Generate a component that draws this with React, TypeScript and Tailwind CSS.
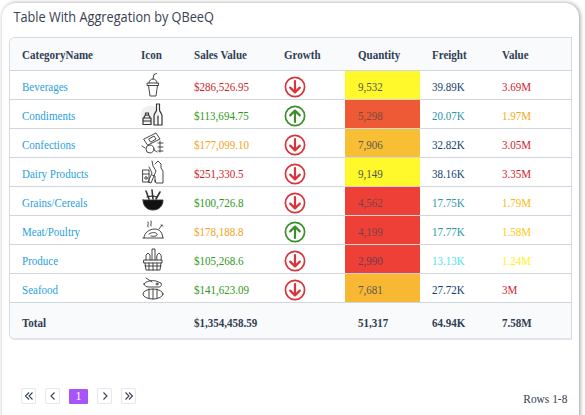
import { ReactNode } from 'react'

const Circle = ({ up }: { up: boolean }) => (
	<svg className="translate-y-[2px]" width="22" height="22" viewBox="0 0 22 22" fill="none" stroke={up ? '#3a8f2a' : '#d8343a'} strokeWidth="1.7" strokeLinecap="round" strokeLinejoin="round">
		<circle cx="11" cy="11" r="9.6" />
		{up ? <path d="M11 17V5.8M6.2 10.4 11 5.6l4.8 4.8" strokeWidth="2.2" /> : <path d="M11 5v11.200M6.200 11.600l4.800 4.800 4.800-4.800" strokeWidth="2.2" />}
	</svg>
)

const Ico = ({ children }: { children: ReactNode }) => (
	<svg className="mx-auto -translate-x-[3px]" width="24" height="26" viewBox="0 0 24 26" fill="none" stroke="#333" strokeWidth="0.9" strokeLinecap="round" strokeLinejoin="round">
		{children}
	</svg>
)

// the text in the reference is a little squeezed sideways
const T = ({ children }: { children: ReactNode }) => (
	<span className="inline-block origin-left translate-y-[3px] scale-x-[0.95] whitespace-nowrap">{children}</span>
)

const icons: Record<string, ReactNode> = {
	Beverages: (
		<Ico>
			<path d="M6.500 11h11v2.500h-11zM7.500 13.500l1.500 10.500h6l1.500-10.500M8 11c.3-2.800 2-4 4-4s3.700 1.200 4 4M12 7l1-4.500 2.500-1" />
		</Ico>
	),
	Condiments: (
		<Ico>
			<circle cx="9" cy="14" r="9.500" fill="#f0f0f0" stroke="none" />
			<path d="M2 17h8v6.500H2zM3 17c0-2 1-3 3-3s3 1 3 3M4.500 14v-2h3v2M2.500 20h7" strokeWidth="1.200" />
			<path d="M13 24V15c0-3 2.500-4 2.500-6V3h3v6c0 2 2.500 3 2.500 6v9zM17 15v9" strokeWidth="1.200" />
		</Ico>
	),
	Confections: (
		<Ico>
			<path d="M3 9 15 3l4 6-12 6zM8 9l5-3 2 3-5 3z" />
			<circle cx="9" cy="19" r="4" />
			<path d="M1 16l3 2M13 20l3 2M19 11v11M17 13h5M17 17h5M17 21h5" />
		</Ico>
	),
	'Dairy Products': (
		<Ico>
			<path d="M2 11h6v12H2zM2 15h6M14 5l3-3 3 3v4l2 3v12h-7l-1-3M11 2l1 5 3 5-5 12-3-1 4-9-3-6" />
			<circle cx="5" cy="19" r="1.300" />
			<path d="M11 16l3 1v6" />
		</Ico>
	),
	'Grains/Cereals': (
		<Ico>
			<path d="M2 12h20c0 6-4 10-10 10S2 18 2 12z" fill="#111" />
			<path d="M8 11 5 3M12 11 11 2M15 11l4-7" strokeWidth="1.600" />
			<path d="M6 9c3-1 7-1 10 0" strokeWidth="1.200" />
		</Ico>
	),
	'Meat/Poultry': (
		<Ico>
			<path d="M2 21h20M3 21c0-5 5-9 11-9 3 0 6 2 7 5l1 4" />
			<path d="M8 17c3-2 7-2 8 0s-3 3-6 2M18 12l3-4M20 8l2 1M7 10c-1-2 1-2 0-5M10 9c-1-2 1-2 0-5" />
		</Ico>
	),
	Produce: (
		<Ico>
			<path d="M3 14h18v3H3zM4 17l1 7h14l1-7M4 20h16M8 17v7M12 17v7M16 17v7" />
			<path d="M5 14V9l2-2 2 2v5M11 14V3h3v11M16 14c-1-3 0-6 2-7 2 1 3 4 2 7" />
		</Ico>
	),
	Seafood: (
		<Ico>
			<ellipse cx="12" cy="19" rx="10" ry="5" />
			<path d="M3 9c2-3 8-4 12-3l5 2c1 2 0 4-2 4H8C5 12 4 11 3 9zM8 14v9M12 14v10M16 14v9M5 3l6 4" />
			<circle cx="16" cy="9" r="1" />
		</Ico>
	)
}

const rows = [
	['Beverages', '$286,526.95', 'text-[#cf1d2a]', false, '9,532', 'bg-[#fff92b]', 'text-[#555]', '39.89K', 'text-[#123f70]', '3.69M', 'text-[#cf1d2a]'],
	['Condiments', '$113,694.75', 'text-[#2f9a1a]', true, '5,298', 'bg-[#ee5a36]', 'text-[#7a4a3c]', '20.07K', 'text-[#2a96a8]', '1.97M', 'text-[#f5a81c]'],
	['Confections', '$177,099.10', 'text-[#f5a21c]', false, '7,906', 'bg-[#f8bf34]', 'text-[#5c5a50]', '32.82K', 'text-[#123f70]', '3.05M', 'text-[#cf1d2a]'],
	['Dairy Products', '$251,330.5', 'text-[#cf1d2a]', false, '9,149', 'bg-[#fff92b]', 'text-[#555]', '38.16K', 'text-[#123f70]', '3.35M', 'text-[#cf1d2a]'],
	['Grains/Cereals', '$100,726.8', 'text-[#2f9a1a]', false, '4,562', 'bg-[#ee4037]', 'text-[#7a4048]', '17.75K', 'text-[#2a96a8]', '1.79M', 'text-[#f9b914]'],
	['Meat/Poultry', '$178,188.8', 'text-[#f5a21c]', true, '4,199', 'bg-[#ee4037]', 'text-[#7a4048]', '17.77K', 'text-[#2a96a8]', '1.58M', 'text-[#fbc91a]'],
	['Produce', '$105,268.6', 'text-[#2f9a1a]', false, '2,990', 'bg-[#ee4037]', 'text-[#6f3b50]', '13.13K', 'text-[#4fdfef]', '1.24M', 'text-[#fff21a]'],
	['Seafood', '$141,623.09', 'text-[#2f9a1a]', false, '7,681', 'bg-[#f8b834]', 'text-[#5c5a50]', '27.72K', 'text-[#123f70]', '3M', 'text-[#cf1d2a]']
] as const

const headers = ['CategoryName', 'Icon', 'Sales Value', 'Growth', 'Quantity', 'Freight', 'Value']

const PageBtn = ({ children }: { children: ReactNode }) => (
	<div className="flex h-[16px] w-[15px] items-center justify-center rounded-[2px] border border-[#e5e7eb] bg-white text-[#374151]">
		{children}
	</div>
)

const Chevron = ({ d }: { d: string }) => (
	<svg width="10" height="10" viewBox="0 0 10 10" fill="none" stroke="#374151" strokeWidth="1.1">
		<path d={d} />
	</svg>
)

export default function App() {
	return (
		<div className="h-[415px] w-[585px] overflow-hidden bg-white pl-[2px] pt-[3px]">
			<div className="flex h-[420px] w-[577px] flex-col rounded-t-[14px] bg-white pl-[7px] font-['Liberation_Serif',serif] shadow-[1px_0_4px_#9a9a9a]">
				<h1 className="mt-[2px] h-[32px] origin-left scale-x-[0.877] whitespace-nowrap pl-[5px] font-['Open_Sans',sans-serif] text-[14.5px] leading-[24px] text-[#374151]">
					Table With Aggregation by QBeeQ
				</h1>
				<div className="w-[563px] overflow-hidden rounded-bl-[6px] rounded-tl-[6px] border-x border-t border-b-2 border-[#d3dae2] border-b-[#e1e5ea]">
					<table className="w-full table-fixed border-collapse text-[11.6px]">
						<colgroup>
							<col className="w-[119px]" />
							<col className="w-[53px]" />
							<col className="w-[90px]" />
							<col className="w-[73px]" />
							<col className="w-[75px]" />
							<col className="w-[70px]" />
							<col />
						</colgroup>
						<thead>
							<tr className="h-[32px] bg-[#f9fafb]">
								{headers.map(h => (
									<th key={h} className={`text-left font-bold text-[#2f3e55] ${h == 'Quantity' ? 'pl-[13px]' : 'pl-[12px]'}`}>
										<span className="inline-block origin-left translate-y-[2px] scale-x-[0.95] whitespace-nowrap">{h}</span>
									</th>
								))}
							</tr>
						</thead>
						<tbody>
							{rows.map(r => (
								<tr key={r[0]} className="h-[29px] border-t border-[#cfd6de]">
									<td className="pl-[12px] text-[#2a9fe0]">
										<T>{r[0]}</T>
									</td>
									<td>{icons[r[0]]}</td>
									<td className={`pl-[12px] ${r[2]}`}>
										<T>{r[1]}</T>
									</td>
									<td className="pl-[12px]">
										<Circle up={r[3]} />
									</td>
									<td className={`pl-[13px] ${r[5]} ${r[6]}`}>
										<T>{r[4]}</T>
									</td>
									<td className={`pl-[12px] ${r[8]}`}>
										<T>{r[7]}</T>
									</td>
									<td className={`pl-[12px] ${r[10]}`}>
										<T>{r[9]}</T>
									</td>
								</tr>
							))}
						</tbody>
						<tfoot>
							<tr className="h-[36px] border-t border-[#cfd6de] bg-[#f9fafb] font-bold text-[#2f3e55]">
								<td className="pl-[12px]">
									<T>Total</T>
								</td>
								<td />
								<td className="pl-[12px]">
									<T>$1,354,458.59</T>
								</td>
								<td />
								<td className="pl-[13px]">
									<T>51,317</T>
								</td>
								<td className="pl-[12px]">
									<T>64.94K</T>
								</td>
								<td className="pl-[12px]">
									<T>7.58M</T>
								</td>
							</tr>
						</tfoot>
					</table>
				</div>
				<div className="mt-[48px] flex items-start justify-between pl-[12px] pr-[12px]">
					<div className="flex items-center gap-[9px]">
						<PageBtn>
							<Chevron d="M5 1.500 1.500 5 5 8.500M8.500 1.500 5 5l3.500 3.500" />
						</PageBtn>
						<PageBtn>
							<Chevron d="M6.500 1.500 3 5l3.500 3.500" />
						</PageBtn>
						<div className="flex h-[15px] w-[19px] items-center justify-center rounded-[1px] bg-[#a855f7] text-[12px] text-white">1</div>
						<PageBtn>
							<Chevron d="M3.500 1.500 7 5 3.500 8.500" />
						</PageBtn>
						<PageBtn>
							<Chevron d="M1.500 1.500 5 5 1.500 8.500M5 1.500 8.500 5 5 8.500" />
						</PageBtn>
					</div>
					<span className="mt-[2px] origin-right scale-x-[0.95] text-[12px] text-[#374151]">Rows 1-8</span>
				</div>
			</div>
		</div>
	)
}
